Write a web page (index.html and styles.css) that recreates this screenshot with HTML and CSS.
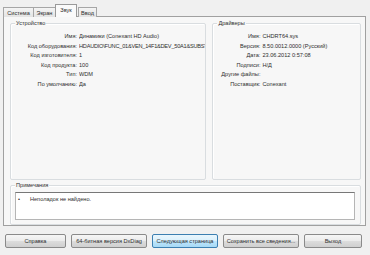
FILE: index.html
```html
<!DOCTYPE html>
<html>
<head>
<meta charset="utf-8">
<link rel="stylesheet" href="styles.css">
</head>
<body>
<div class="win">
  <div class="tabs">
    <div class="tab">Система</div>
    <div class="tab">Экран</div>
    <div class="tab active">Звук</div>
    <div class="tab">Ввод</div>
  </div>
  <div class="panel">
    <div class="groups">
      <div class="group dev">
        <div class="legend">Устройство</div>
        <div class="rows">
          <div class="k">Имя:</div><div class="v">Динамики (Conexant HD Audio)</div>
          <div class="k">Код оборудования:</div><div class="v tight">HDAUDIO\FUNC_01&amp;VEN_14F1&amp;DEV_50A1&amp;SUBS'</div>
          <div class="k">Код изготовителя:</div><div class="v">1</div>
          <div class="k">Код продукта:</div><div class="v">100</div>
          <div class="k">Тип:</div><div class="v">WDM</div>
          <div class="k">По умолчанию:</div><div class="v">Да</div>
        </div>
      </div>
      <div class="group drv">
        <div class="legend">Драйверы</div>
        <div class="rows">
          <div class="k">Имя:</div><div class="v">CHDRT64.sys</div>
          <div class="k">Версия:</div><div class="v">8.50.0012.0000 (Русский)</div>
          <div class="k">Дата:</div><div class="v">23.06.2012 0:57:08</div>
          <div class="k">Подписи:</div><div class="v">Н/Д</div>
          <div class="k">Другие файлы:</div><div class="v"></div>
          <div class="k">Поставщик:</div><div class="v">Conexant</div>
        </div>
      </div>
    </div>
    <div class="group notes">
      <div class="legend">Примечания</div>
      <div class="notebox"><span class="bullet">•</span><span>Неполадок не найдено.</span></div>
    </div>
  </div>
  <div class="buttons">
    <div class="btn b1">Справка</div>
    <div class="btn b2">64-битная версия DxDiag</div>
    <div class="btn b3 focus">Следующая страница</div>
    <div class="btn b4">Сохранить все сведения...</div>
    <div class="btn b5">Выход</div>
  </div>
</div>
</body>
</html>
```
FILE: styles.css
```css
html, body {
  margin: 0;
  padding: 0;
}
body {
  width: 370px;
  height: 255px;
  background: #f0f0f0;
  font-family: "Liberation Sans", "DejaVu Sans", sans-serif;
  font-size: 5.6px;
  color: #2e2e2e;
  overflow: hidden;
}
.win {
  padding: 5px 4px 0 3px;
}
.tabs {
  display: flex;
  height: 12px;
  align-items: flex-end;
}
.tab {
  height: 10px;
  line-height: 10px;
  box-sizing: border-box;
  border: 1px solid #a6a6a6;
  border-bottom: none;
  background: linear-gradient(#f4f4f4, #e3e3e3);
  margin-right: -1px;
  text-align: center;
}
.tab:nth-child(1) { width: 31px; }
.tab:nth-child(2) { width: 23px; }
.tab:nth-child(4) { width: 19px; }
.tab.active {
  width: 22px;
  height: 13px;
  line-height: 11px;
  background: #fafafa;
  position: relative;
  z-index: 1;
  margin: 0 1px 0 0;
  border-color: #9a9a9a;
}
.panel {
  margin-top: -1px;
  height: 210px;
  border: 1px solid #a0a0a0;
  background: #f7f7f7;
  padding: 6px 4px 0 6px;
  box-sizing: border-box;
}
.groups {
  display: flex;
  gap: 6px;
  height: 157px;
}
.group {
  border: 1px solid #d9dde0;
  border-radius: 2px;
  box-shadow: inset 1px 1px 0 #fff;
  position: relative;
  box-sizing: border-box;
}
.dev { width: 197px; }
.drv { width: 149px; }
.legend {
  position: absolute;
  top: -4px;
  left: 4px;
  background: #f7f7f7;
  padding: 0 1px;
  line-height: 7px;
}
.rows {
  display: grid;
  grid-template-columns: 66px 1fr;
  column-gap: 2px;
  row-gap: 2.6px;
  margin-top: 9px;
  line-height: 7px;
  white-space: nowrap;
}
.drv .rows {
  grid-template-columns: 47px 1fr;
}
.k { text-align: right; }
.v { overflow: hidden; }
.v.tight { letter-spacing: -0.22px; }
.notes {
  margin-top: 5px;
  height: 40px;
}
.notebox {
  margin: 6px 5px 0 4px;
  height: 28px;
  background: #fff;
  border: 1px solid #b5b5b5;
  border-top-color: #777;
  display: flex;
  gap: 10px;
  padding: 3px 0 0 2px;
  box-sizing: border-box;
  line-height: 7px;
}
.buttons {
  display: flex;
  margin-top: 8px;
  padding-left: 2px;
  gap: 5px;
}
.btn {
  height: 14px;
  box-sizing: border-box;
  border: 1px solid #8a8a8a;
  border-radius: 2px;
  background: linear-gradient(#f6f6f6 0%, #ebebeb 50%, #dddddd 51%, #cfcfcf 100%);
  text-align: center;
  line-height: 12px;
  white-space: nowrap;
}
.b1 { width: 61px; }
.b2 { width: 76px; }
.b3 { width: 66px; }
.b4 { width: 76px; }
.b5 { width: 58px; }
.btn.focus {
  border-color: #3c7fb1;
  background: linear-gradient(#eaf6fd 0%, #d9f0fc 50%, #bee6fd 51%, #a7d9f5 100%);
}
```
